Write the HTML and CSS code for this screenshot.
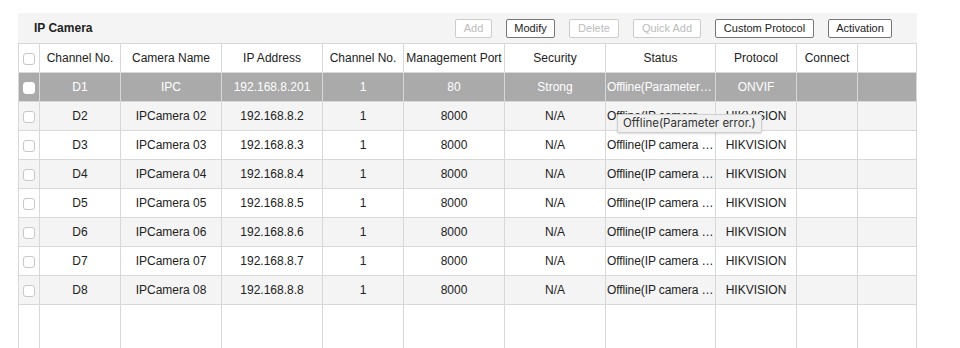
FILE: index.html
```html
<!DOCTYPE html>
<html lang="en">
<head>
    <meta charset="UTF-8">
    <title>IP Camera</title>
    <link rel="stylesheet" href="styles.css">
</head>
<body>

<div class="panel">
    <div class="panel-bar">
        <div class="panel-title">IP Camera</div>
        <div class="toolbar">
            <button class="btn btn-add" disabled>Add</button>
            <button class="btn btn-modify">Modify</button>
            <button class="btn btn-delete" disabled>Delete</button>
            <button class="btn btn-quick" disabled>Quick Add</button>
            <button class="btn btn-custom">Custom Protocol</button>
            <button class="btn btn-activate">Activation</button>
        </div>
    </div>

    <table class="grid">
        <colgroup>
            <col style="width:21px">
            <col style="width:81px">
            <col style="width:101px">
            <col style="width:101px">
            <col style="width:81px">
            <col style="width:101px">
            <col style="width:101px">
            <col style="width:110px">
            <col style="width:81px">
            <col style="width:61px">
            <col>
        </colgroup>
        <thead>
            <tr>
                <th><span class="check"></span></th>
                <th>Channel No.</th>
                <th>Camera Name</th>
                <th>IP Address</th>
                <th>Channel No.</th>
                <th>Management Port</th>
                <th>Security</th>
                <th>Status</th>
                <th>Protocol</th>
                <th>Connect</th>
                <th></th>
            </tr>
        </thead>
        <tbody>
            <tr class="selected">
                <td><span class="check"></span></td>
                <td>D1</td>
                <td>IPC</td>
                <td>192.168.8.201</td>
                <td>1</td>
                <td>80</td>
                <td>Strong</td>
                <td class="status"><span class="status-text">Offline(Parameter error.)</span></td>
                <td>ONVIF</td>
                <td></td>
                <td></td>
            </tr>
            <tr>
                <td><span class="check"></span></td>
                <td>D2</td>
                <td>IPCamera 02</td>
                <td>192.168.8.2</td>
                <td>1</td>
                <td>8000</td>
                <td>N/A</td>
                <td class="status tip-cell">
                    <span class="status-text">Offline(IP camera not connected.)</span>
                    <div class="tooltip">Offline(Parameter error.)</div>
                </td>
                <td>HIKVISION</td>
                <td></td>
                <td></td>
            </tr>
            <tr>
                <td><span class="check"></span></td>
                <td>D3</td>
                <td>IPCamera 03</td>
                <td>192.168.8.3</td>
                <td>1</td>
                <td>8000</td>
                <td>N/A</td>
                <td class="status"><span class="status-text">Offline(IP camera not connected.)</span></td>
                <td>HIKVISION</td>
                <td></td>
                <td></td>
            </tr>
            <tr>
                <td><span class="check"></span></td>
                <td>D4</td>
                <td>IPCamera 04</td>
                <td>192.168.8.4</td>
                <td>1</td>
                <td>8000</td>
                <td>N/A</td>
                <td class="status"><span class="status-text">Offline(IP camera not connected.)</span></td>
                <td>HIKVISION</td>
                <td></td>
                <td></td>
            </tr>
            <tr>
                <td><span class="check"></span></td>
                <td>D5</td>
                <td>IPCamera 05</td>
                <td>192.168.8.5</td>
                <td>1</td>
                <td>8000</td>
                <td>N/A</td>
                <td class="status"><span class="status-text">Offline(IP camera not connected.)</span></td>
                <td>HIKVISION</td>
                <td></td>
                <td></td>
            </tr>
            <tr>
                <td><span class="check"></span></td>
                <td>D6</td>
                <td>IPCamera 06</td>
                <td>192.168.8.6</td>
                <td>1</td>
                <td>8000</td>
                <td>N/A</td>
                <td class="status"><span class="status-text">Offline(IP camera not connected.)</span></td>
                <td>HIKVISION</td>
                <td></td>
                <td></td>
            </tr>
            <tr>
                <td><span class="check"></span></td>
                <td>D7</td>
                <td>IPCamera 07</td>
                <td>192.168.8.7</td>
                <td>1</td>
                <td>8000</td>
                <td>N/A</td>
                <td class="status"><span class="status-text">Offline(IP camera not connected.)</span></td>
                <td>HIKVISION</td>
                <td></td>
                <td></td>
            </tr>
            <tr>
                <td><span class="check"></span></td>
                <td>D8</td>
                <td>IPCamera 08</td>
                <td>192.168.8.8</td>
                <td>1</td>
                <td>8000</td>
                <td>N/A</td>
                <td class="status"><span class="status-text">Offline(IP camera not connected.)</span></td>
                <td>HIKVISION</td>
                <td></td>
                <td></td>
            </tr>
            <tr class="filler">
                <td></td><td></td><td></td><td></td><td></td><td></td>
                <td></td><td></td><td></td><td></td><td></td>
            </tr>
        </tbody>
    </table>
</div>

</body>
</html>
```

FILE: styles.css
```css
body {
    margin: 0;
    padding: 0;
    background-color: #fff;
    font-family: "Liberation Sans", Arial, sans-serif;
    font-size: 12px;
    color: #222;
}
.panel {
    width: 899px;
    height: 335px;
    margin: 13px 0 0 18px;
    overflow: hidden;
}
.panel-bar {
    height: 30px;
    background-color: #f4f4f4;
    display: flex;
    align-items: center;
    justify-content: space-between;
    padding: 0 25px 0 16px;
}
.panel-title {
    font-weight: bold;
    font-size: 12px;
    color: #222;
}
.toolbar {
    display: flex;
    gap: 14px;
}
.btn {
    height: 19px;
    padding: 0;
    background-color: #fff;
    border: 1px solid #777;
    border-radius: 2px;
    font-family: "Liberation Sans", Arial, sans-serif;
    font-size: 11px;
    color: #222;
    cursor: pointer;
}
.btn:disabled {
    border-color: #ccc;
    color: #bbb;
    cursor: default;
}
.btn-add { width: 37px; }
.btn-modify { width: 49px; }
.btn-delete { width: 50px; }
.btn-quick { width: 68px; }
.btn-custom { width: 99px; }
.btn-activate { width: 64px; }
.grid {
    width: 899px;
    table-layout: fixed;
    border-collapse: collapse;
}
.grid th,
.grid td {
    height: 28px;
    padding: 0 2px;
    border: 1px solid #d8d8d8;
    text-align: center;
    font-weight: normal;
    white-space: nowrap;
    overflow: hidden;
    text-overflow: ellipsis;
}
.grid th {
    background-color: #fff;
}
.grid th:first-child,
.grid td:first-child {
    padding: 0;
}
.grid tbody tr:nth-child(even) td {
    background-color: #f4f4f4;
}
.grid tbody tr.selected td {
    background-color: #aaa;
    color: #fff;
}
.grid td.status {
    text-align: left;
    padding: 0 1px;
}
.status-text {
    display: block;
    overflow: hidden;
    text-overflow: ellipsis;
    white-space: nowrap;
    letter-spacing: -0.1px;
}
.grid tr.filler td {
    height: 60px;
    background-color: #fff;
}
.check {
    display: inline-block;
    width: 10px;
    height: 10px;
    border: 1px solid #c8c8c8;
    border-radius: 3px;
    background-color: #fff;
    vertical-align: middle;
}
.selected .check {
    border-color: #fff;
}
.grid td.tip-cell {
    position: relative;
    overflow: visible;
}
.tooltip {
    position: absolute;
    top: 12px;
    left: 11px;
    padding: 1px 5px 2px;
    background-color: #f0f0f0;
    border: 1px solid #d0d0d0;
    border-radius: 2px;
    box-shadow: 0 1px 2px rgba(0, 0, 0, 0.15);
    font-family: Inter, "Noto Sans", sans-serif;
    font-size: 11.5px;
    letter-spacing: 0;
    color: #333;
    z-index: 10;
}
```
